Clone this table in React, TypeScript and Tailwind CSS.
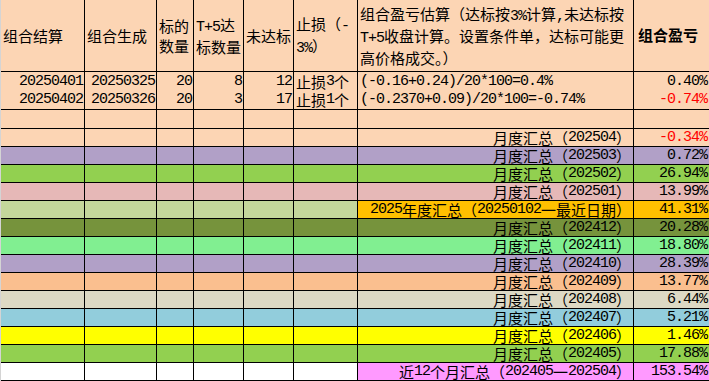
import React from 'react';

const GRID = 'grid grid-cols-[84px_72px_37px_50px_50px_64px_276px_1fr]';

// ASCII runs use a monospace face, CJK runs a wider sans face, like the sheet's SimSun
const Txt: React.FC<{ s: string }> = ({ s }) => (
  <>
    {s
      .split(/([\x20-\x7e]+)/)
      .filter(Boolean)
      .map((p, i) =>
        /^[\x20-\x7e]+$/.test(p) ? (
          <span key={i} className="font-['Liberation_Mono',monospace] text-[15px] tracking-[-1px]">
            {p}
          </span>
        ) : (
          <span key={i} className="font-['Noto_Sans_CJK_SC',sans-serif] text-[15px]">
            {p}
          </span>
        )
      )}
  </>
);

const header: string[][] = [
  ['组合结算'],
  ['组合生成'],
  ['标的', '数量'],
  ['T+5达', '标数量'],
  ['未达标'],
  ['止损（-', '3%）'],
  ['组合盈亏估算（达标按3%计算,未达标按', 'T+5收盘计算。设置条件单，达标可能更', '高价格成交。）'],
];

const trades = [
  ['20250401', '20250325', '20', '8', '12', '止损3个', '(-0.16+0.24)/20*100=0.4%', '0.40%'],
  ['20250402', '20250326', '20', '3', '17', '止损1个', '(-0.2370+0.09)/20*100=-0.74%', '-0.74%'],
];

interface Summary {
  bg: string;
  tail?: string;
  label: string;
  value: string;
}

const summaries: Summary[] = [
  { bg: 'bg-[#fcd5b4]', label: '月度汇总（202504）', value: '-0.34%' },
  { bg: 'bg-[#b1a0c7]', label: '月度汇总（202503）', value: '0.72%' },
  { bg: 'bg-[#92d050]', label: '月度汇总（202502）', value: '26.94%' },
  { bg: 'bg-[#e6b8b7]', label: '月度汇总（202501）', value: '13.99%' },
  { bg: 'bg-[#c4d79b]', tail: 'bg-[#ffc000]', label: '2025年度汇总（20250102一最近日期）', value: '41.31%' },
  { bg: 'bg-[#76933c]', label: '月度汇总（202412）', value: '20.28%' },
  { bg: 'bg-[#81ef91]', label: '月度汇总（202411）', value: '18.80%' },
  { bg: 'bg-[#b1a0c7]', label: '月度汇总（202410）', value: '28.39%' },
  { bg: 'bg-[#fabf8f]', label: '月度汇总（202409）', value: '13.77%' },
  { bg: 'bg-[#ddd9c4]', label: '月度汇总（202408）', value: '6.44%' },
  { bg: 'bg-[#92cddc]', label: '月度汇总（202407）', value: '5.21%' },
  { bg: 'bg-[#ffff00]', label: '月度汇总（202406）', value: '1.46%' },
  { bg: 'bg-[#92d050]', label: '月度汇总（202405）', value: '17.88%' },
  { bg: 'bg-white', tail: 'bg-[#ff99ff]', label: '近12个月汇总（202405一202504）', value: '153.54%' },
];

const red = (v: string) => (v.startsWith('-') ? 'text-[#ff0000]' : 'text-black');

export default function App() {
  return (
    <div className="w-[709px] h-[381px] overflow-hidden bg-white border-l border-[#d4d4d4] text-black">
      {/* header */}
      <div className={`${GRID} h-[72px] bg-[#fcd5b4]`}>
        {header.map((lines, i) => (
          <div
            key={i}
            className="flex flex-col justify-center pl-[2px] border-r border-b border-black leading-[19px] whitespace-nowrap"
          >
            {lines.map((l, j) => (
              <div key={j}>
                <Txt s={l} />
              </div>
            ))}
          </div>
        ))}
        <div className="flex items-center pl-[4px] border-b border-black font-bold whitespace-nowrap">
          <span className="font-['Noto_Sans_CJK_SC',sans-serif] text-[15px]">组合盈亏</span>
        </div>
      </div>

      {/* trades */}
      {trades.map((r, i) => (
        <div key={i} className={`${GRID} h-[19px] bg-[#fcd5b4] ${i === 1 ? 'border-b border-black' : ''}`}>
          {r.map((c, j) => {
            const left = j === 5 || j === 6;
            return (
              <div
                key={j}
                className={`flex items-center leading-[18px] whitespace-nowrap ${
                  j < 7 ? 'border-r border-black' : ''
                } ${left ? 'justify-start pl-[2px]' : j === 7 ? 'justify-end pr-[2px]' : 'justify-end pr-[1px]'} ${
                  j === 7 ? red(c) : ''
                }`}
              >
                <Txt s={c} />
              </div>
            );
          })}
        </div>
      ))}

      {/* empty row */}
      <div className={`${GRID} h-[19px] bg-[#fcd5b4] border-b border-black`}>
        {Array.from({ length: 8 }).map((_, j) => (
          <div key={j} className={j < 7 ? 'border-r border-black' : ''} />
        ))}
      </div>

      {/* summaries */}
      {summaries.map((s, i) => (
        <div key={i} className={`${GRID} h-[18px] border-b border-black ${s.bg}`}>
          {Array.from({ length: 6 }).map((_, j) => (
            <div key={j} className="border-r border-black" />
          ))}
          <div
            className={`flex items-center justify-end pr-[2px] border-r border-black leading-[17px] whitespace-nowrap ${
              s.tail ?? ''
            }`}
          >
            <Txt s={s.label} />
          </div>
          <div
            className={`flex items-center justify-end pr-[2px] leading-[17px] whitespace-nowrap ${s.tail ?? ''} ${red(
              s.value
            )}`}
          >
            <Txt s={s.value} />
          </div>
        </div>
      ))}
    </div>
  );
}
